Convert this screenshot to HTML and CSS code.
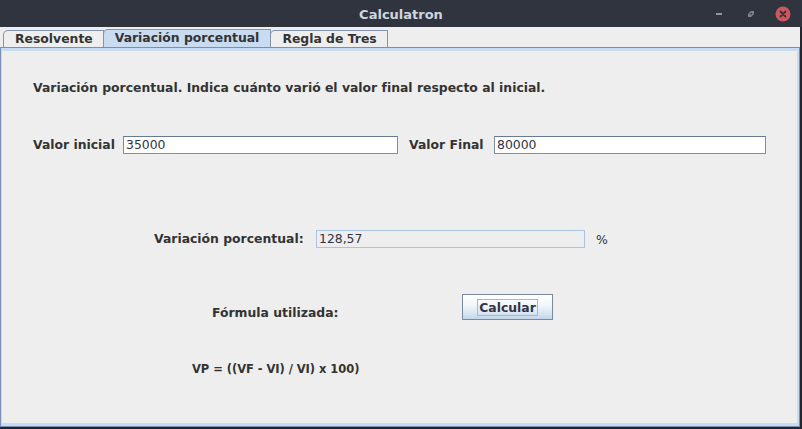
FILE: index.html
```html
<!DOCTYPE html>
<html lang="es">
<head>
<meta charset="utf-8">
<title>Calculatron</title>
<link rel="stylesheet" href="styles.css">
</head>
<body>
<div class="window">
  <header class="titlebar">
    <div></div>
    <div class="title">Calculatron</div>
    <div class="controls">
      <span class="ctl min"><svg width="10" height="10" viewBox="0 0 10 10"><rect x="2" y="4" width="6" height="2" fill="#8f96a3"/></svg></span>
      <span class="ctl max"><svg width="10" height="10" viewBox="0 0 10 10"><path d="M2 5 L5 2 L8 2 L8 5 L5 8 L2 8 Z" fill="#7d8490"/><path d="M4.5 5.5 L6 4" stroke="#2f343f" stroke-width="1.2"/></svg></span>
      <span class="ctl close"><svg width="16" height="16" viewBox="0 0 16 16"><circle cx="8" cy="8" r="7.5" fill="#cc575d"/><path d="M5.5 5.5 L10.5 10.5 M10.5 5.5 L5.5 10.5" stroke="#2f343f" stroke-width="1.8" stroke-linecap="round"/></svg></span>
    </div>
  </header>
  <main class="client">
    <nav class="tabs">
      <div class="tab">Resolvente</div>
      <div class="tab selected">Variación porcentual</div>
      <div class="tab">Regla de Tres</div>
    </nav>
    <section class="panel">
      <p class="heading">Variación porcentual. Indica cuánto varió el valor final respecto al inicial.</p>
      <div class="row inputs">
        <label class="lbl lbl-ini">Valor inicial</label>
        <div class="field f-ini">35000</div>
        <label class="lbl lbl-fin">Valor Final</label>
        <div class="field f-fin">80000</div>
      </div>
      <div class="row result">
        <label class="lbl lbl-var">Variación porcentual:</label>
        <div class="field readonly">128,57</div>
        <span class="pct">%</span>
      </div>
      <div class="row formula">
        <label class="lbl">Fórmula utilizada:</label>
        <button class="btn"><span class="focus">Calcular</span></button>
      </div>
      <p class="expr">VP = ((VF - VI) / VI) x 100)</p>
    </section>
  </main>
</div>
</body>
</html>
```

FILE: styles.css
```css
html, body {
  margin: 0;
  padding: 0;
}
body {
  width: 802px;
  height: 429px;
  background: #23262e;
  overflow: hidden;
  font-family: "DejaVu Sans", sans-serif;
}
.window {
  display: flex;
  flex-direction: column;
  width: 802px;
  height: 429px;
}
.titlebar {
  height: 27px;
  background: #2f343f;
  display: grid;
  grid-template-columns: 1fr auto 1fr;
  align-items: center;
}
.title {
  color: #cfd5de;
  font-weight: bold;
  font-size: 13px;
  padding-top: 1px;
}
.controls {
  display: flex;
  justify-content: flex-end;
  align-items: center;
  padding-right: 11px;
}
.ctl {
  display: flex;
  align-items: center;
  justify-content: center;
}
.ctl.min { width: 10px; margin-right: 22px; }
.ctl.max { width: 10px; margin-right: 19px; }
.ctl.close { width: 16px; }
.client {
  width: 800px;
  height: 400px;
  background: #eeeeee;
  display: flex;
  flex-direction: column;
}
.tabs {
  display: flex;
  align-items: flex-end;
  padding: 2px 0 0 3px;
  height: 18px;
}
.tab {
  height: 16px;
  line-height: 16px;
  padding: 0 10px 0 11px;
  border: 1px solid #8494ad;
  border-bottom: none;
  border-top-left-radius: 5px;
  background: #eeeeee;
  color: #333333;
  font-size: 12.4px;
  font-weight: bold;
  margin-right: -1px;
}
.tab.selected {
  height: 17px;
  background: #c8dbf0;
  position: relative;
  z-index: 1;
  padding: 0 11px 0 11px;
}
.panel {
  flex: 1;
  border: 1px solid #7a8fb6;
  box-shadow: inset 0 3px 0 #c8dbf0, inset -2px 0 0 #c8dbf0, inset 0 -3px 0 #c8dbf0, inset 1px 0 0 #c8dbf0;
  padding: 32px 0 0 32px;
  color: #333333;
  font-size: 12.4px;
}
.heading {
  margin: 0;
  height: 16px;
  line-height: 16px;
  font-weight: bold;
}
.row {
  display: flex;
  align-items: center;
}
.lbl {
  font-weight: bold;
  line-height: 16px;
}
.field {
  box-sizing: border-box;
  height: 18px;
  line-height: 16px;
  border: 1px solid #7d8fa3;
  border-top-color: #667a93;
  background: #ffffff;
  padding-left: 2px;
  color: #333344;
  font-size: 12.4px;
}
.inputs {
  margin-top: 40px;
}
.lbl-ini { width: 90px; }
.f-ini { width: 275px; }
.lbl-fin { width: 85px; margin-left: 11px; }
.f-fin { width: 272px; }
.result {
  margin-top: 76px;
  margin-left: 121px;
}
.lbl-var { width: 162px; }
.readonly {
  width: 269px;
  background: #eeeeee;
  border: 1px solid #a9c3e2;
}
.pct {
  margin-left: 11px;
}
.formula {
  margin-top: 46px;
  margin-left: 179px;
  align-items: flex-start;
}
.formula .lbl {
  margin-top: 11px;
  width: 250px;
}
.btn {
  box-sizing: border-box;
  width: 91px;
  height: 26px;
  border: 1px solid #7a8a9e;
  background: linear-gradient(#ffffff 0%, #f3f7fb 40%, #d9e6f3 75%, #c3d6ea 100%);
  font-family: "DejaVu Sans", sans-serif;
  font-size: 12.4px;
  font-weight: bold;
  color: #333344;
  padding: 0;
  display: flex;
  align-items: center;
  justify-content: center;
}
.focus {
  border: 1px solid #a3b8cc;
  padding: 0 1px;
  line-height: 15px;
}
.expr {
  margin: 40px 0 0 159px;
  height: 16px;
  line-height: 16px;
  font-weight: bold;
  font-size: 11.5px;
  letter-spacing: -0.05px;
}
```
